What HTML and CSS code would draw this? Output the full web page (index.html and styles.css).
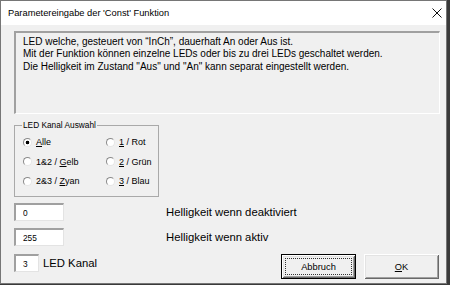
FILE: index.html
```html
<!DOCTYPE html>
<html lang="de">
<head>
    <meta charset="UTF-8">
    <title>Parametereingabe der 'Const' Funktion</title>
    <link rel="stylesheet" href="styles.css">
</head>
<body>
    <div class="window">
        <div class="titlebar">
            <span class="title">Parametereingabe der 'Const' Funktion</span>
            <svg class="close" width="10" height="10" viewBox="0 0 10 10">
                <path d="M0.5 0.5 L9.5 9.5 M9.5 0.5 L0.5 9.5" stroke="#111" stroke-width="1" fill="none"/>
            </svg>
        </div>

        <div class="client">
            <div class="info">
                LED welche, gesteuert von “InCh”, dauerhaft An oder Aus ist.<br>
                Mit der Funktion können einzelne LEDs oder bis zu drei LEDs geschaltet werden.<br>
                Die Helligkeit im Zustand "Aus" und "An" kann separat eingestellt werden.
            </div>

            <fieldset class="channel">
                <legend>LED Kanal Auswahl</legend>
                <div class="radio-grid">
                    <label class="opt"><input type="radio" name="kanal" checked><span><u>A</u>lle</span></label>
                    <label class="opt"><input type="radio" name="kanal"><span><u>1</u> / Rot</span></label>
                    <label class="opt"><input type="radio" name="kanal"><span>1&amp;2 / <u>G</u>elb</span></label>
                    <label class="opt"><input type="radio" name="kanal"><span><u>2</u> / Grün</span></label>
                    <label class="opt"><input type="radio" name="kanal"><span>2&amp;3 / <u>Z</u>yan</span></label>
                    <label class="opt"><input type="radio" name="kanal"><span><u>3</u> / Blau</span></label>
                </div>
            </fieldset>

            <div class="row row-first">
                <input class="field" type="text" value="0">
                <span class="caption">Helligkeit wenn deaktiviert</span>
            </div>
            <div class="row row-second">
                <input class="field" type="text" value="255">
                <span class="caption">Helligkeit wenn aktiv</span>
            </div>
            <div class="row row-last">
                <div class="channel-no">
                    <input class="field field-small" type="text" value="3">
                    <span class="caption caption-near">LED Kanal</span>
                </div>
                <div class="buttons">
                    <button class="btn btn-default"><span class="focus">Abbruch</span></button>
                    <button class="btn"><u>O</u>K</button>
                </div>
            </div>
        </div>
    </div>
</body>
</html>
```

FILE: styles.css
```css
* {
    box-sizing: border-box;
}
body {
    margin: 0;
    background: #3a3a3a;
    font-family: "Liberation Sans", Arial, sans-serif;
    color: #000;
}
.window {
    width: 447px;
    height: 284px;
    border: 1px solid #767676;
    background: #f0f0f0;
    display: flex;
    flex-direction: column;
}
.titlebar {
    height: 24px;
    flex-shrink: 0;
    background: #fff;
    display: flex;
    align-items: center;
    justify-content: space-between;
    padding: 0 4px 0 7px;
}
.title {
    font-size: 9.3px;
    color: #000;
}
.close {
    display: block;
    width: 10px;
    height: 10px;
}
.client {
    padding: 6px 0 0 13px;
}

/* Beschreibung */
.info {
    width: 426px;
    height: 83px;
    border-style: solid;
    border-width: 2px 1px 1px 2px;
    border-color: #a0a0a0 #fff #fff #a0a0a0;
    padding: 3px 7px 0;
    font-size: 10px;
    line-height: 12.3px;
}

/* Kanal Auswahl */
.channel {
    width: 145px;
    margin: 6px 0 0;
    padding: 2.5px 0 5px 8px;
    border: 1px solid #a9a9a9;
}
.channel legend {
    padding: 0 1px;
    margin-left: -1px;
    font-size: 8.3px;
    line-height: 10px;
}
.radio-grid {
    display: grid;
    grid-template-columns: 83px 1fr;
    grid-auto-rows: 19.5px;
}
.opt {
    display: flex;
    align-items: center;
    gap: 4px;
    font-size: 9px;
}
.opt input {
    appearance: none;
    -webkit-appearance: none;
    margin: 0;
    width: 9px;
    height: 9px;
    border-radius: 50%;
    border: 1px solid;
    border-color: #8a8a8a #e6e6e6 #e6e6e6 #8a8a8a;
    background: #fff;
}
.opt input:checked {
    background: radial-gradient(circle, #000 0, #000 1.6px, #fff 2.1px);
}

/* Eingabezeilen */
.row {
    display: flex;
    align-items: center;
    width: 426px;
}
.row-first {
    margin-top: 6px;
}
.row-second {
    margin-top: 7px;
}
.row-last {
    margin-top: 8px;
    align-items: flex-start;
}
.field {
    width: 50px;
    height: 18px;
    margin: 0;
    border-style: solid;
    border-width: 2px 1px 1px 2px;
    border-color: #a0a0a0 #e3e3e3 #e3e3e3 #a0a0a0;
    background: #fff;
    padding: 0 0 0 7px;
    font-family: inherit;
    font-size: 8.3px;
    color: #000;
    outline: none;
}
.field-small {
    width: 25px;
}
.caption {
    margin-left: 102px;
    font-size: 11.3px;
}
.channel-no {
    display: flex;
    align-items: center;
}
.caption-near {
    margin-left: 4px;
}
.buttons {
    margin-left: auto;
    margin-right: 1px;
    display: flex;
    gap: 8px;
}
.btn {
    width: 75px;
    height: 25px;
    padding: 0;
    border: none;
    background: #f0f0f0;
    font-family: inherit;
    font-size: 9.3px;
    color: #000;
    box-shadow: inset 1px 1px #fff, inset -1px -1px #696969, inset 2px 2px #e3e3e3, inset -2px -2px #a0a0a0;
}
.btn-default {
    border: 1px solid #000;
    display: flex;
    padding: 3px;
}
.focus {
    flex: 1;
    display: flex;
    align-items: center;
    justify-content: center;
    border: 1px dotted #333;
}
```
